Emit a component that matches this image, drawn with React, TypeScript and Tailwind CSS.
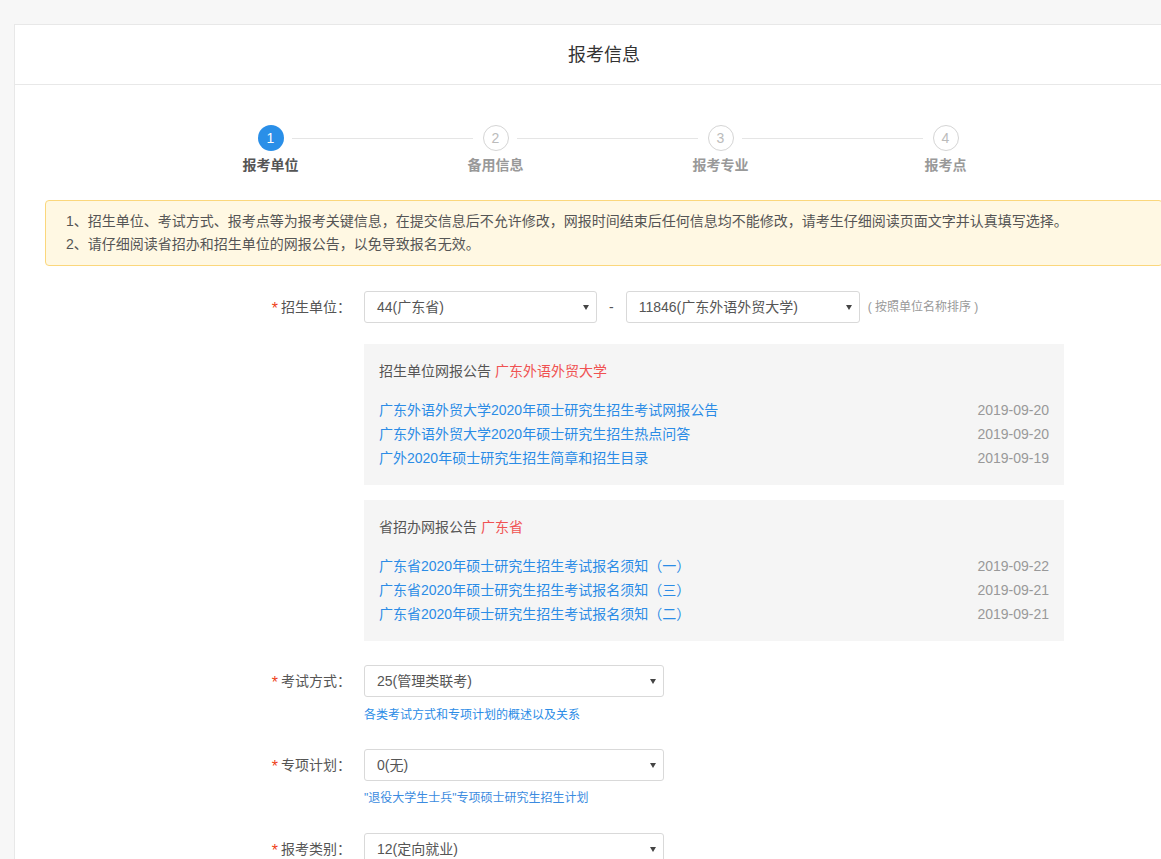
import React from "react";

type Notice = { title: string; date: string };

const steps = ["报考单位", "备用信息", "报考专业", "报考点"];

const unitNotices: Notice[] = [
  { title: "广东外语外贸大学2020年硕士研究生招生考试网报公告", date: "2019-09-20" },
  { title: "广东外语外贸大学2020年硕士研究生招生热点问答", date: "2019-09-20" },
  { title: "广外2020年硕士研究生招生简章和招生目录", date: "2019-09-19" },
];

const provinceNotices: Notice[] = [
  { title: "广东省2020年硕士研究生招生考试报名须知（一）", date: "2019-09-22" },
  { title: "广东省2020年硕士研究生招生考试报名须知（三）", date: "2019-09-21" },
  { title: "广东省2020年硕士研究生招生考试报名须知（二）", date: "2019-09-21" },
];

function Select({ value, width }: { value: string; width: string }) {
  return (
    <div
      className={`flex h-[32px] ${width} items-center justify-between rounded-[3px] border border-[#d9d9d9] bg-white pl-3 pr-[7px] text-sm text-[#555]`}
    >
      <span>{value}</span>
      <span className="h-0 w-0 border-x-[3px] border-t-[5px] border-x-transparent border-t-[#444]" />
    </div>
  );
}

function FieldLabel({ text }: { text: string }) {
  return (
    <div className="flex h-[32px] w-[306px] shrink-0 items-center justify-end text-sm text-[#555]">
      <span className="mr-[3px] translate-y-[2px] text-base text-[#ee3f1a]">*</span>
      {text}
    </div>
  );
}

function NoticeBox({
  label,
  highlight,
  items,
  className = "",
}: {
  label: string;
  highlight: string;
  items: Notice[];
  className?: string;
}) {
  return (
    <div className={`w-[700px] bg-[#f5f5f5] p-[15px] text-sm ${className}`}>
      <div className="leading-6 text-[#555]">
        {label} <span className="text-[#f05252]">{highlight}</span>
      </div>
      <ul className="mt-[15px]">
        {items.map((n) => (
          <li key={n.title + n.date} className="flex justify-between leading-6">
            <a className="cursor-pointer text-[#2b8ce6]">{n.title}</a>
            <span className="text-[#999]">{n.date}</span>
          </li>
        ))}
      </ul>
    </div>
  );
}

export default function App() {
  return (
    <div className="min-h-screen overflow-hidden bg-[#f7f7f7] pl-[14px] pt-[24px] font-['Liberation_Sans','Noto_Sans_CJK_SC',sans-serif] text-[#555]">
      <div className="w-[1180px] border border-[#e8e8e8] bg-white pb-10">
        {/* HEADER */}
        <div className="flex h-[60px] items-center justify-center border-b border-[#e8e8e8] text-lg text-[#333]">
          报考信息
        </div>

        <div className="px-[30px]">
          {/* STEPS */}
          <div className="flex pl-[113px] pt-[40px]">
            {steps.map((s, i) => (
              <div key={s} className="relative flex w-[225px] flex-col items-center">
                {i === 0 ? (
                  <div className="flex h-[26px] w-[26px] items-center justify-center rounded-full bg-[#2a8fe8] text-sm text-white">
                    {i + 1}
                  </div>
                ) : (
                  <div className="flex h-[26px] w-[26px] items-center justify-center rounded-full border border-[#d5d5d5] text-sm text-[#bbb]">
                    {i + 1}
                  </div>
                )}
                {i < steps.length - 1 && (
                  <div className="absolute left-[134px] top-[13px] h-px w-[181px] bg-[#e5e5e5]" />
                )}
                <div
                  className={`mt-1 text-sm font-bold leading-5 ${i === 0 ? "text-[#555]" : "text-[#999]"}`}
                >
                  {s}
                </div>
              </div>
            ))}
          </div>

          {/* WARNING */}
          <div className="mt-[25px] rounded-[4px] border border-[#fbd77c] bg-[#fff8e3] px-5 py-[9px] text-sm leading-[23px] text-[#555]">
            <p>
              1、招生单位、考试方式、报考点等为报考关键信息，在提交信息后不允许修改，网报时间结束后任何信息均不能修改，请考生仔细阅读页面文字并认真填写选择。
            </p>
            <p>2、请仔细阅读省招办和招生单位的网报公告，以免导致报名无效。</p>
          </div>

          {/* UNIT */}
          <div className="mt-[25px] flex">
            <FieldLabel text="招生单位：" />
            <div className="ml-[13px]">
              <div className="flex items-center">
                <Select value="44(广东省)" width="w-[233px]" />
                <span className="mx-3 text-sm text-[#555]">-</span>
                <Select value="11846(广东外语外贸大学)" width="w-[234px]" />
                <span className="ml-2 text-xs text-[#999]">(&nbsp;按照单位名称排序&nbsp;)</span>
              </div>
              <NoticeBox
                className="mt-[21px]"
                label="招生单位网报公告"
                highlight="广东外语外贸大学"
                items={unitNotices}
              />
              <NoticeBox
                className="mt-[15px]"
                label="省招办网报公告"
                highlight="广东省"
                items={provinceNotices}
              />
            </div>
          </div>

          {/* EXAM TYPE */}
          <div className="mt-[24px] flex">
            <FieldLabel text="考试方式：" />
            <div className="ml-[13px]">
              <Select value="25(管理类联考)" width="w-[300px]" />
              <a className="mt-[9px] block cursor-pointer text-xs leading-[18px] text-[#2b8ce6]">
                各类考试方式和专项计划的概述以及关系
              </a>
            </div>
          </div>

          {/* SPECIAL PLAN */}
          <div className="mt-[25px] flex">
            <FieldLabel text="专项计划：" />
            <div className="ml-[13px]">
              <Select value="0(无)" width="w-[300px]" />
              <a className="mt-2 block cursor-pointer text-xs leading-[18px] text-[#3b8be0]">
                "退役大学生士兵"专项硕士研究生招生计划
              </a>
            </div>
          </div>

          {/* CATEGORY */}
          <div className="mt-[26px] flex">
            <FieldLabel text="报考类别：" />
            <div className="ml-[13px]">
              <Select value="12(定向就业)" width="w-[300px]" />
            </div>
          </div>
        </div>
      </div>
    </div>
  );
}
